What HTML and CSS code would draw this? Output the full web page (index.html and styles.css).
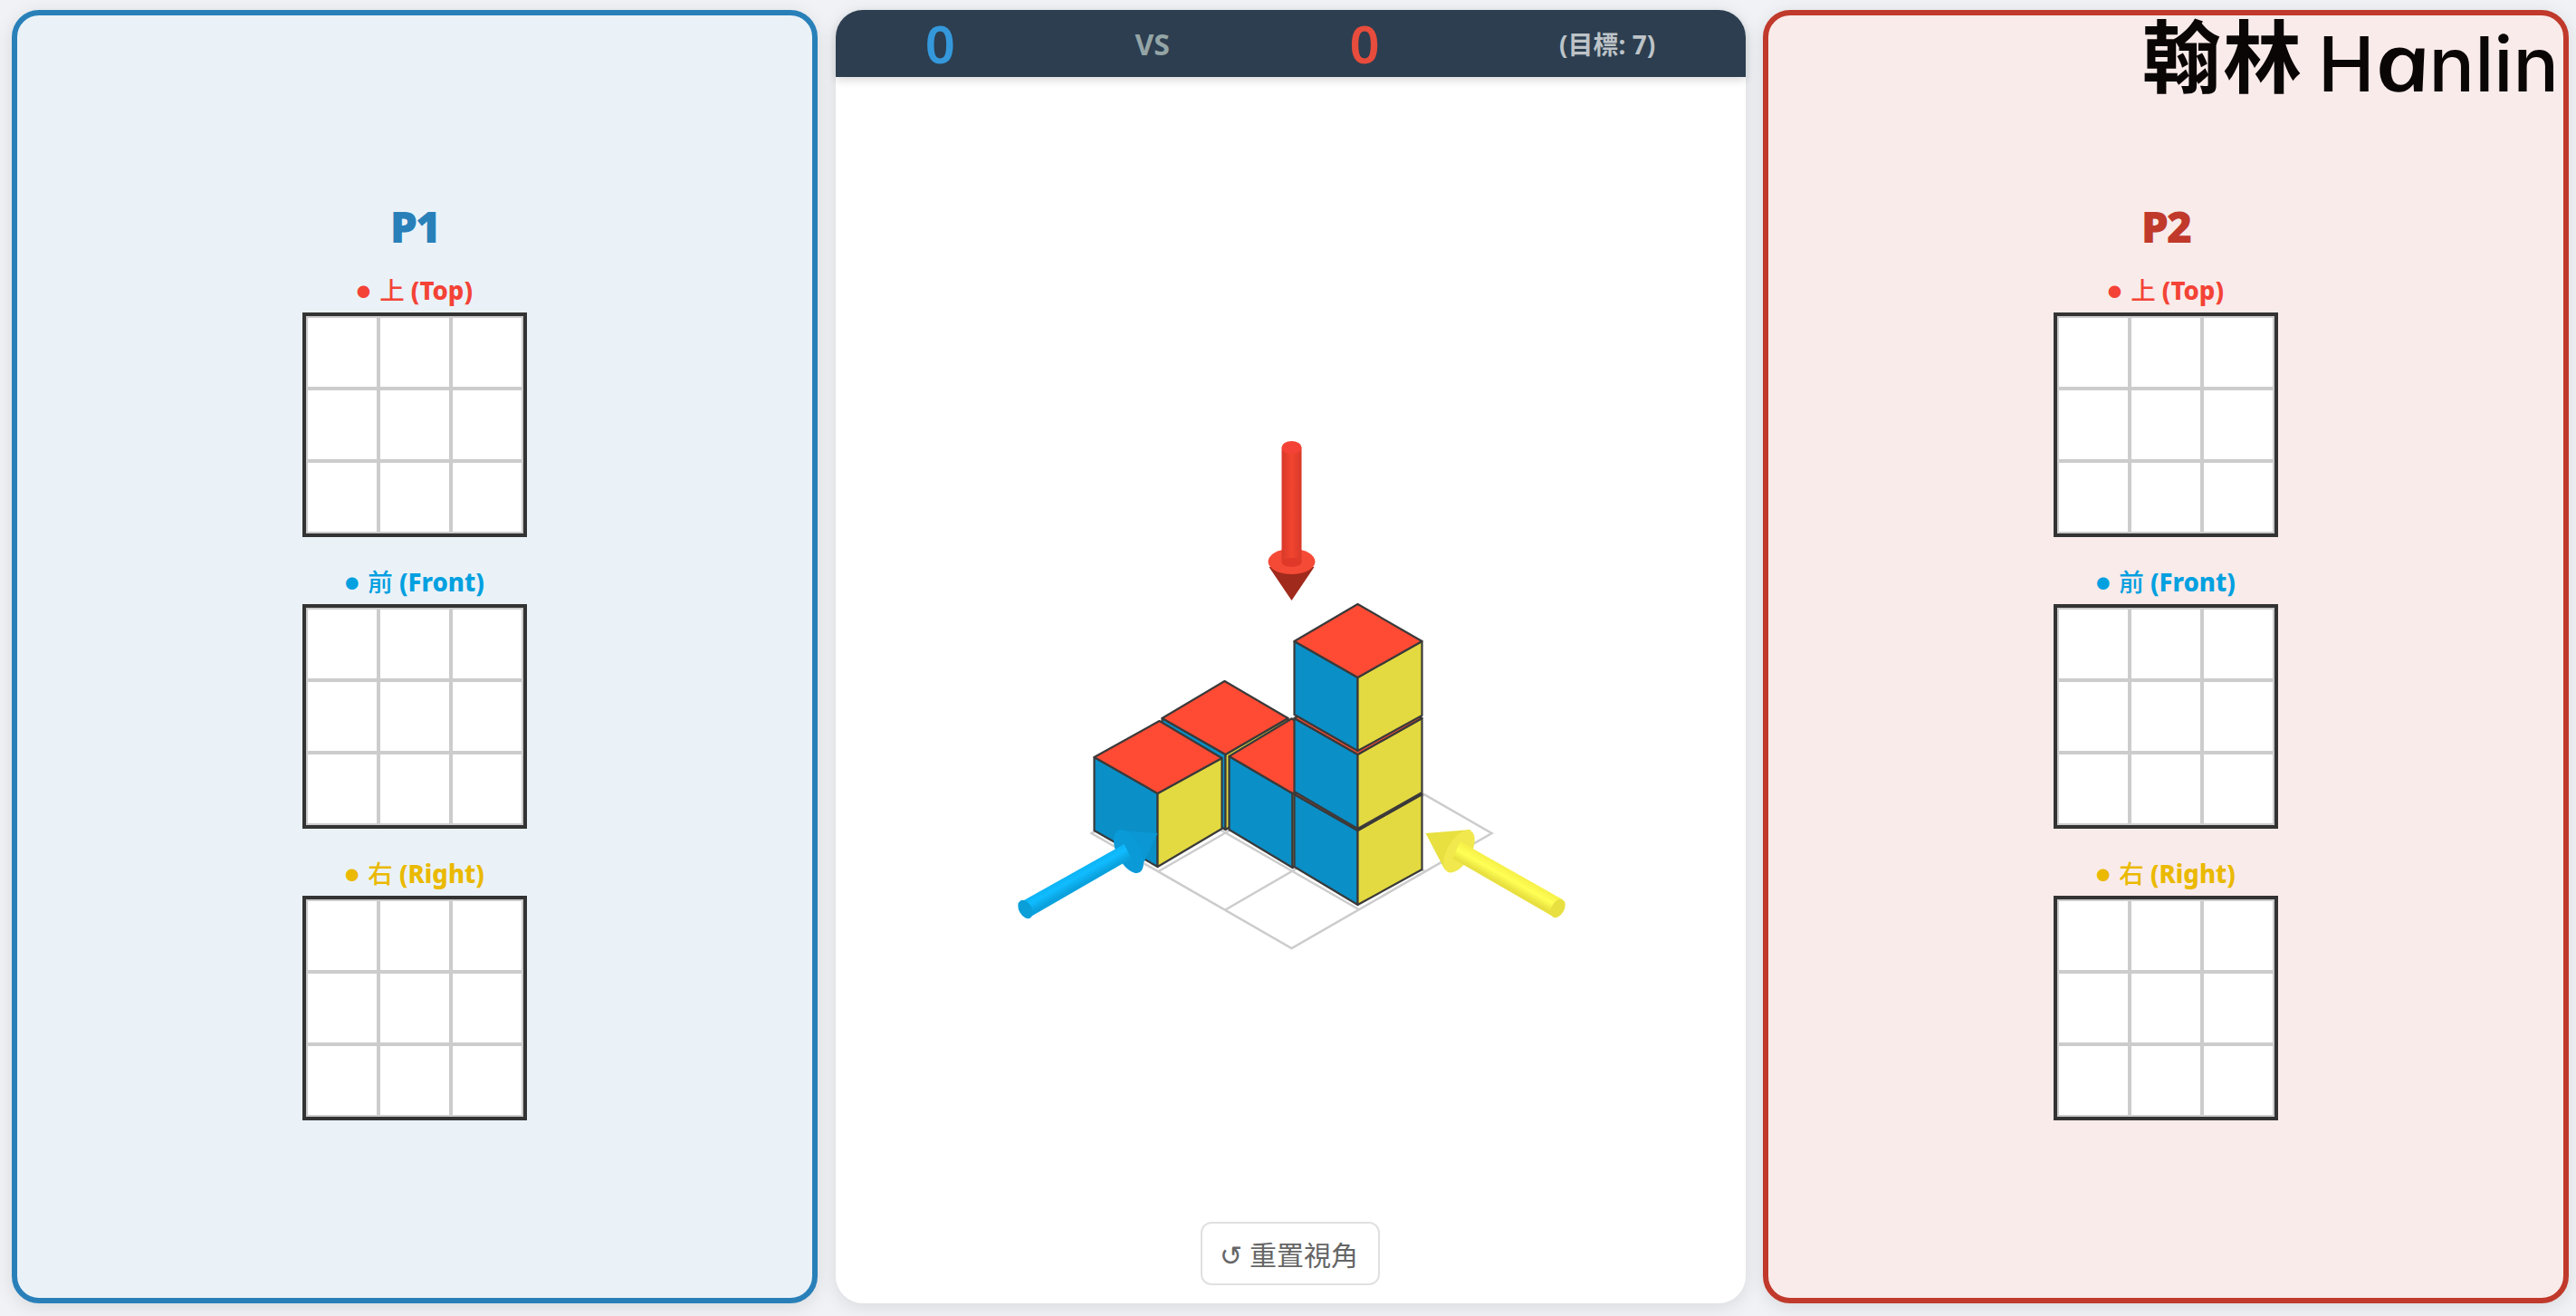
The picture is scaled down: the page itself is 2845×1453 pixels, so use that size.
FILE: index.html
```html
<!DOCTYPE html>
<html lang="zh-Hant">
<head>
<meta charset="utf-8">
<title>Hanlin</title>
<link rel="stylesheet" href="styles.css">
</head>
<body>
<main class="game">
  <section class="panel panel-p1">
    <h2 class="player">P1</h2>
    <div class="view"><div class="view-label top"><span class="dot">●</span> <span class="cjk">上</span> (Top)</div>
      <div class="board"><i></i><i></i><i></i><i></i><i></i><i></i><i></i><i></i><i></i></div></div>
    <div class="view"><div class="view-label front"><span class="dot">●</span> <span class="cjk">前</span> (Front)</div>
      <div class="board"><i></i><i></i><i></i><i></i><i></i><i></i><i></i><i></i><i></i></div></div>
    <div class="view"><div class="view-label right"><span class="dot">●</span> <span class="cjk">右</span> (Right)</div>
      <div class="board"><i></i><i></i><i></i><i></i><i></i><i></i><i></i><i></i><i></i></div></div>
  </section>

  <section class="center">
    <header class="scorebar">
      <span class="score score-p1">0</span>
      <span class="versus">VS</span>
      <span class="score score-p2">0</span>
      <span class="target">(目標: 7)</span>
    </header>
    <div class="stage">
      <svg class="scene" viewBox="922.5 85 1005 1354" width="1005" height="1354" aria-hidden="true">
        <defs>
          <linearGradient id="redShaft" x1="0" x2="1" y1="0" y2="0">
            <stop offset="0" stop-color="#d8392a"/><stop offset=".5" stop-color="#f2452f"/><stop offset="1" stop-color="#d8392a"/>
          </linearGradient>
          <linearGradient id="blueShaft" gradientUnits="userSpaceOnUse" x1="1180" y1="963" x2="1189" y2="979">
            <stop offset="0" stop-color="#0cb0f0"/><stop offset=".5" stop-color="#10bcff"/><stop offset="1" stop-color="#0aa2de"/>
          </linearGradient>
          <linearGradient id="yellowShaft" gradientUnits="userSpaceOnUse" x1="1668" y1="961" x2="1659" y2="977">
            <stop offset="0" stop-color="#f6f048"/><stop offset=".5" stop-color="#ffff55"/><stop offset="1" stop-color="#e8e040"/>
          </linearGradient>
        </defs>
        <g class="floor">
          <path d="M1205 920L1426 793L1647 920L1426 1047Z"/>
          <path d="M1279 877L1500 1004M1352 835L1573 962M1279 962L1500 835M1352 1005L1573 877"/>
        </g>

        <g class="cube">
          <path class="face-l" d="M1283 793L1353 833V916L1283 876Z"/>
          <path class="face-r" d="M1353 833L1422 793V876L1353 916Z"/>
          <path class="face-t" d="M1352 752L1422 793L1353 833L1283 793Z"/>
        </g>
        <g class="cube">
          <path class="face-l" d="M1208 836L1278 876V957L1208 917Z"/>
          <path class="face-r" d="M1278 876L1349 837V915L1278 957Z"/>
          <path class="face-t" d="M1280 796L1349 837L1278 876L1208 836Z"/>
        </g>
        <g class="cube">
          <path class="face-l" d="M1357 835L1427 876V958L1357 916Z"/>
          <path class="face-r" d="M1427 876L1497 835V916L1427 958Z"/>
          <path class="face-t" d="M1426 793.5L1497 835L1427 876L1357 835Z"/>
        </g>

        <g class="cube">
          <path class="face-l" d="M1429 877L1499 917V999L1429 957Z"/>
          <path class="face-r" d="M1499 917L1570 877V960L1499 999Z"/>
          <path class="face-t" d="M1499 836L1570 877L1499 917L1429 877Z"/>
        </g>
        <g class="cube">
          <path class="face-l" d="M1429 793L1499 833V915L1429 874Z"/>
          <path class="face-r" d="M1499 833L1570 793V875L1499 915Z"/>
          <path class="face-t" d="M1499 752L1570 793L1499 833L1429 793Z"/>
        </g>
        <g class="cube">
          <path class="face-l" d="M1429 708L1499 748V829L1429 789Z"/>
          <path class="face-r" d="M1499 748L1570 708V790L1499 829Z"/>
          <path class="face-t" d="M1499 667L1570 708L1499 748L1429 708Z"/>
        </g>

        <g class="arrow-red">
          <path class="cone" d="M1401 626L1426 663L1451 626Z"/>
          <ellipse class="disc" cx="1426" cy="620" rx="26" ry="14"/>
          <rect x="1415" y="494" width="22" height="127" fill="url(#redShaft)"/>
          <ellipse class="shaft-end" cx="1426" cy="621" rx="11" ry="5"/>
          <ellipse class="cap" cx="1426" cy="494" rx="11" ry="7"/>
        </g>
        <g class="arrow-blue">
          <path class="cone" d="M1240 917L1278 920L1263 952Z"/>
          <ellipse class="disc" cx="1246" cy="940" rx="13" ry="26" transform="rotate(-27 1246 940)"/>
          <path d="M1125 997L1241 932L1249 948L1138 1012Z" fill="url(#blueShaft)"/>
          <ellipse class="cap" cx="1132" cy="1004" rx="7" ry="11" transform="rotate(-30 1132 1004)"/>
        </g>
        <g class="arrow-yellow">
          <path class="cone" d="M1574 920L1624 916L1595 960Z"/>
          <ellipse class="disc" cx="1611" cy="940" rx="13" ry="26" transform="rotate(30 1611 940)"/>
          <path d="M1612 929L1725 993L1713 1011L1604 948Z" fill="url(#yellowShaft)"/>
          <ellipse class="cap" cx="1720" cy="1003" rx="7" ry="11" transform="rotate(30 1720 1003)"/>
        </g>
      </svg>
      <button class="reset" type="button">↺ 重置視角</button>
    </div>
  </section>

  <section class="panel panel-p2">
    <h2 class="player">P2</h2>
    <div class="view"><div class="view-label top"><span class="dot">●</span> <span class="cjk">上</span> (Top)</div>
      <div class="board"><i></i><i></i><i></i><i></i><i></i><i></i><i></i><i></i><i></i></div></div>
    <div class="view"><div class="view-label front"><span class="dot">●</span> <span class="cjk">前</span> (Front)</div>
      <div class="board"><i></i><i></i><i></i><i></i><i></i><i></i><i></i><i></i><i></i></div></div>
    <div class="view"><div class="view-label right"><span class="dot">●</span> <span class="cjk">右</span> (Right)</div>
      <div class="board"><i></i><i></i><i></i><i></i><i></i><i></i><i></i><i></i><i></i></div></div>
  </section>
</main>
<div class="logo"><span class="logo-cjk">翰林</span><span class="logo-latin">H<span class="logo-a">a</span>nlin</span></div>
</body>
</html>
```

FILE: styles.css
```css
* { box-sizing: border-box; }
html, body { height: 100%; }
body {
  margin: 0;
  background: #f0f2f5;
  font-family: "Noto Sans", "Noto Sans CJK TC", sans-serif;
  overflow: hidden;
}
.game {
  height: 100vh;
  padding: 11px 8px 14px 13px;
  display: grid;
  grid-template-columns: 890px 1005px 1fr;
  gap: 19.5px;
}
.panel {
  border: 6px solid;
  border-radius: 30px;
  box-shadow: 0 4px 20px rgba(0, 0, 0, .1);
  display: flex;
  flex-direction: column;
  align-items: center;
  justify-content: center;
}
.panel-p1 { background: #eaf2f8; border-color: #2980b9; color: #2980b9; }
.panel-p2 { background: #f9ebea; border-color: #c0392b; color: #c0392b; }
.player {
  margin: 0 0 16px;
  font-size: 48px;
  line-height: 74px;
  font-weight: 900;
  letter-spacing: -2px;
}
.view { display: flex; flex-direction: column; align-items: center; margin-bottom: 32px; }
.view:last-child { margin-bottom: 0; }
.view-label {
  font-size: 27.5px;
  line-height: 36px;
  margin-bottom: 5px;
  font-weight: 800;
  white-space: nowrap;
}
.dot { font-size: 15px; vertical-align: 3px; margin-right: 3px; }
.cjk { font-weight: 500; }
.top { color: #f44336; }
.front { color: #03a0e0; }
.right { color: #eab900; }
.board {
  width: 248px;
  height: 248px;
  border: 4px solid #333;
  background: #ccc;
  padding: 2px;
  display: grid;
  grid-template-columns: repeat(3, 1fr);
  grid-template-rows: repeat(3, 1fr);
  gap: 4px;
}
.board i { background: #fff; }

.center {
  background: #fff;
  border-radius: 30px;
  box-shadow: 0 4px 20px rgba(0, 0, 0, .1);
  display: flex;
  flex-direction: column;
}
.scorebar {
  height: 74px;
  flex: none;
  background: #2c3e50;
  border-radius: 30px 30px 0 0;
  box-shadow: 0 4px 10px rgba(0, 0, 0, .14);
  display: flex;
  justify-content: space-around;
  align-items: center;
  font-weight: 700;
  position: relative;
  z-index: 1;
}
.score { font-size: 58px; line-height: 1; font-weight: 600; }
.score-p1 { color: #3498db; }
.score-p2 { color: #e74c3c; }
.versus { font-size: 32px; color: #95a5a6; }
.target { font-size: 28px; color: #bdc3c7; }
.stage {
  flex: 1;
  position: relative;
  display: flex;
  flex-direction: column;
  justify-content: flex-end;
  align-items: center;
  padding-bottom: 20px;
}
.scene { position: absolute; left: 0; top: 0; }
.reset {
  position: relative;
  width: 198px;
  height: 70px;
  padding: 0 3px 0 0;
  border: 2px solid #e0e0e0;
  border-radius: 12px;
  background: #fff;
  color: #666;
  font-family: "Noto Sans", "Noto Sans CJK TC", sans-serif;
  font-size: 30px;
}

.floor path { fill: none; stroke: #ccc; stroke-width: 2.5; }
.cube path { stroke: #3a3a3a; stroke-width: 2.2; stroke-linejoin: round; }
.face-l { fill: #0a8fc7; }
.face-r { fill: #e3d941; }
.face-t { fill: #ff4b33; }
.arrow-red .cone { fill: #a02a1c; }
.arrow-red .disc { fill: #f44a36; }
.arrow-red .shaft-end { fill: #e0392a; }
.arrow-red .cap { fill: #f44336; }
.arrow-blue .disc { fill: #0a9ad8; }
.arrow-blue .cone { fill: #0a97d3; }
.arrow-blue .cap { fill: #0a9fd8; }
.arrow-yellow .disc { fill: #f0e84d; }
.arrow-yellow .cone { fill: #e8e040; }
.arrow-yellow .cap { fill: #e8e040; }

.logo {
  position: absolute;
  top: 10px;
  left: 2366px;
  display: flex;
  align-items: flex-start;
  gap: 16px;
  color: #0a0606;
  white-space: nowrap;
}
.logo-cjk {
  font-family: "Noto Sans CJK TC", sans-serif;
  font-size: 87px;
  line-height: 96px;
  font-weight: 700;
  letter-spacing: 2px;
}
.logo-latin {
  font-family: Inter, sans-serif;
  font-size: 84px;
  line-height: 96px;
  font-weight: 500;
  letter-spacing: 0;
  margin-top: 9px;
}
.logo-a {
  display: inline-block;
  font-family: "Open Sans", sans-serif;
  font-style: italic;
  font-weight: 600;
  font-size: 88px;
  margin: 0 6px 0 3px;
  transform: skewX(12deg) scaleX(1.22);
}
```
